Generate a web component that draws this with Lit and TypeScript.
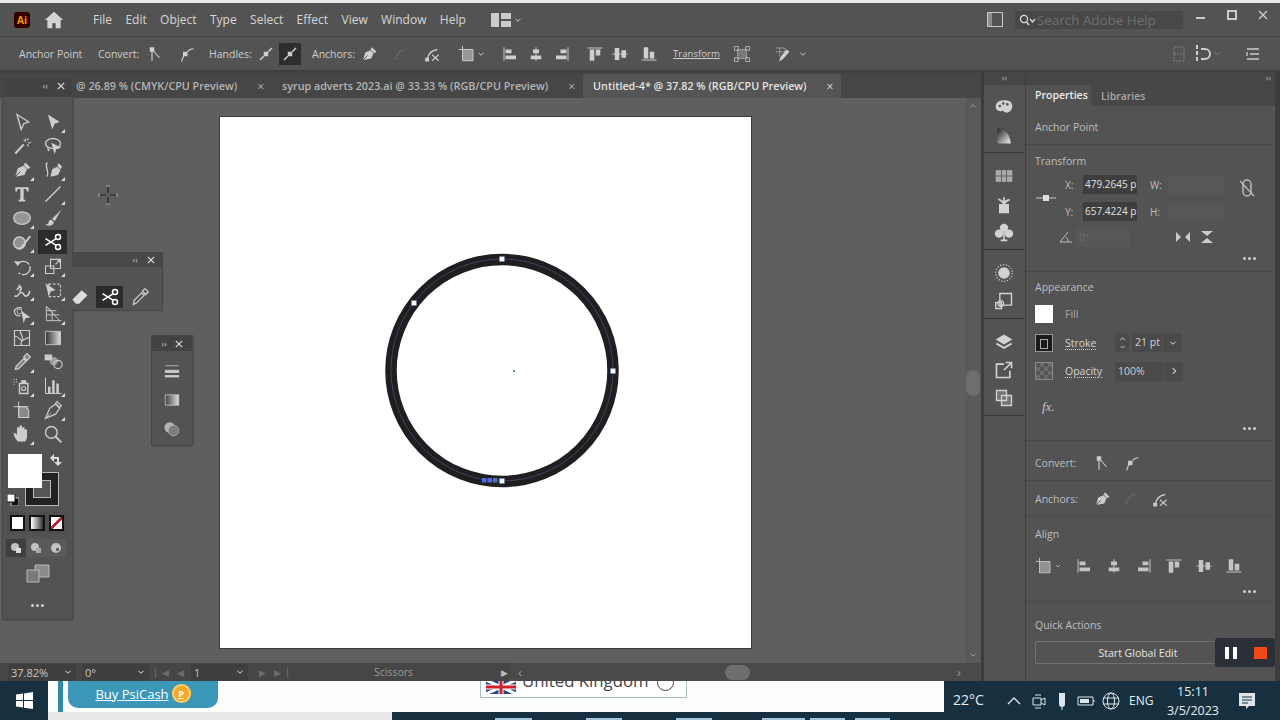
import { LitElement, html, css, svg } from 'lit';
import { customElement } from 'lit/decorators.js';

// shared icon shapes, 24x24 box, painted with currentColor
const scissors = svg`<g fill="none" stroke="currentColor" stroke-width="1.8"><circle cx="18" cy="6" r="3"/><circle cx="18" cy="18" r="3"/><path d="M16 8 3 16M16 16 3 8"/></g>`;
const anchorCorner = svg`<path d="M5 3h6v6H5z" fill="currentColor"/><path d="M8 8v13M10 8l8 9" fill="none" stroke="currentColor" stroke-width="1.5"/>`;
const anchorSmooth = svg`<path d="M8 9h6v6H8z" fill="currentColor"/><path d="M9 14 6 22M14 9c2-3 5-4 8-4" fill="none" stroke="currentColor" stroke-width="1.5"/>`;
const handles = svg`<path d="M9 9h6v6H9z" fill="currentColor"/><path d="M4 20l5-5M15 9l5-5" stroke="currentColor" stroke-width="2"/>`;
const pen = svg`<path d="M4 20 7 10l7-3 4 4-3 7zM14 6l2-3 6 6-3 2z" fill="currentColor"/><path d="M4 20l6-6" stroke="#555" stroke-width="1.2"/>`;
const curv = svg`<path d="M6 19a13 13 0 0 1 12-13" fill="none" stroke="currentColor" stroke-width="2" stroke-dasharray="3 1.5"/>`;
const joinTool = svg`<path d="M6 19C7 11 12 7 19 6" fill="none" stroke="currentColor" stroke-width="1.8"/><path d="M3 17h5v5H3z" fill="currentColor"/><path d="M12 13l9 8M12 21l9-8" stroke="currentColor" stroke-width="1.5"/>`;
const alignL = svg`<path d="M4 3v18" stroke="currentColor" stroke-width="1.3"/><path d="M6 6h8v5H6zM6 14h14v5H6z" fill="currentColor"/>`;
const alignC = svg`<path d="M12 3v18" stroke="currentColor" stroke-width="1.3"/><path d="M8 6h8v5H8zM5 14h14v5H5z" fill="currentColor"/>`;
const alignR = svg`<path d="M20 3v18" stroke="currentColor" stroke-width="1.3"/><path d="M10 6h8v5h-8zM4 14h14v5H4z" fill="currentColor"/>`;
const alignT = svg`<path d="M2 4h20" stroke="currentColor" stroke-width="1.3"/><path d="M5 6h6v15H5zM13 6h6v8h-6z" fill="currentColor"/>`;
const alignM = svg`<path d="M2 12h20" stroke="currentColor" stroke-width="1.3"/><path d="M5 4h6v16H5zM14 7h6v10h-6z" fill="currentColor"/>`;
const alignB = svg`<path d="M2 20h20" stroke="currentColor" stroke-width="1.3"/><path d="M5 3h6v15H5zM13 9h6v9h-6z" fill="currentColor"/>`;
const alignTo = svg`<path d="M6 6h14v15H6z" fill="currentColor" opacity=".55"/><path d="M1 6h19M6 1v20h14V6" fill="none" stroke="currentColor" stroke-width="1.2"/>`;
const chev = svg`<path d="M6 9l6 6 6-6" fill="none" stroke="currentColor" stroke-width="2.4"/>`;

const tools: [unknown, boolean?, boolean?][] = [
  [svg`<path d="M6 3 20 12l-6 2-3 7z" fill="none" stroke="currentColor" stroke-width="1.6"/>`],
  [svg`<path d="M6 3 20 12l-6 2-3 7z" fill="currentColor"/>`, true],
  [svg`<path d="M4 21 14 10" stroke="currentColor" stroke-width="2.4"/><path d="M16 3v4M19 8h4M14 5l1 1M20 3l-2 2M20 12l-2-2" stroke="currentColor" stroke-width="1.3"/>`],
  [svg`<ellipse cx="12" cy="9" rx="9" ry="6" fill="none" stroke="currentColor" stroke-width="1.6"/><path d="M6 13c-2 3 0 6 2 5M10 8l12 6-6 2-2 6z" fill="currentColor"/>`],
  [pen, true],
  [svg`<path d="M9 20 11 11l6-3 4 4-3 6zM17 7l2-3 4 4-2 3z" fill="currentColor"/><path d="M5 3C1 8 8 11 5 20" fill="none" stroke="currentColor" stroke-width="1.5"/>`, true],
  [svg`<path d="M4 4h16v5h-2l-1-3h-3v13h2v2H8v-2h2V6H7L6 9H4z" fill="currentColor"/>`],
  [svg`<path d="M3 21 21 3" stroke="currentColor" stroke-width="1.6"/>`, true],
  [svg`<ellipse cx="12" cy="12" rx="10" ry="7.5" fill="currentColor" fill-opacity=".55" stroke="currentColor" stroke-width="1.5"/>`, true],
  [svg`<path d="M22 2 11 13l3 3zM10 14c-3 0-3 3-4 5l-3 1c3 2 9 2 10-3z" fill="currentColor"/>`],
  [svg`<circle cx="9" cy="13" r="7" fill="currentColor" fill-opacity=".5" stroke="currentColor" stroke-width="1.8"/><path d="M22 5 10 20h-3" fill="none" stroke="currentColor" stroke-width="2.2"/>`, true],
  [scissors, false, true],
  [svg`<path d="M7 10a8 8 0 1 1 1 10" fill="none" stroke="currentColor" stroke-width="1.6" stroke-dasharray="16 2"/><path d="M2 6l5 6 3-5z" fill="currentColor"/>`, true],
  [svg`<path d="M3 12h10v9H3zM9 4h12v11H9z" fill="none" stroke="currentColor" stroke-width="1.3"/><path d="M15 10l5-5M17 5h3v3" fill="none" stroke="currentColor" stroke-width="1.3"/>`, true],
  [svg`<path d="M3 19c5 3 4-4 8-4s3 6 7 4 2-6 4-5M6 12c3-6 8-3 3 2M8 6l3 3" fill="none" stroke="currentColor" stroke-width="2"/>`, true],
  [svg`<path d="M7 5h14v15H7z" fill="none" stroke="currentColor" stroke-width="1.4" stroke-dasharray="3 2"/><path d="M3 4l12 8-6 2-2 6z" fill="currentColor"/>`, true],
  [svg`<path d="M12 5c-6-2-10 2-9 5s3 5 7 4" fill="none" stroke="currentColor" stroke-width="1.5"/><path d="M11 8l11 8-6 1-2 6z" fill="currentColor"/><circle cx="9" cy="9" r="3" fill="none" stroke="currentColor"/>`, true],
  [svg`<path d="M4 3v17h18M4 3l7 6v11M4 8h12M4 13h16M4 3l16 17" fill="none" stroke="currentColor" stroke-width="1.1"/>`, true],
  [svg`<path d="M3 3h18v18H3zM3 10c5-1 6 5 9 5s5-4 9-3M10 3c-1 5 5 6 2 12s0 4 0 6" fill="none" stroke="currentColor" stroke-width="1.4"/>`],
  [svg`<defs><linearGradient id="g1"><stop offset="0" stop-color="#333"/><stop offset="1" stop-color="#ddd"/></linearGradient></defs><path d="M3 4h18v16H3z" fill="url(#g1)" stroke="#ccc"/>`],
  [svg`<path d="M4 21l1-4 9-9 3 3-9 9zM14 6l4-4 4 4-4 4z" fill="currentColor" fill-opacity=".4" stroke="currentColor" stroke-width="1.4"/>`, true],
  [svg`<path d="M2 3h9v7H2z" fill="currentColor"/><circle cx="13" cy="11" r="5" fill="currentColor" opacity=".6"/><circle cx="18" cy="15" r="5" fill="none" stroke="currentColor" stroke-width="1.4"/>`],
  [svg`<path d="M9 9h10v12H9z" fill="none" stroke="currentColor" stroke-width="1.8"/><circle cx="14" cy="15" r="2.4" fill="none" stroke="currentColor" stroke-width="1.4"/><path d="M11 5h6v4h-6z" fill="currentColor"/><path d="M2 4h1M5 4h1M2 7h1M5 7h1M2 10h1" stroke="currentColor" stroke-width="1.5"/>`, true],
  [svg`<path d="M3 2v19h19" fill="none" stroke="currentColor" stroke-width="1.2"/><path d="M6 13h3v8H6zM11 5h3v16h-3zM16 9h3v12h-3z" fill="currentColor"/>`, true],
  [svg`<path d="M2 8h18M8 2v16" stroke="currentColor" stroke-width="1.2"/><path d="M8 8h8l4 4v9H8z" fill="currentColor" fill-opacity=".45" stroke="currentColor" stroke-width="1.3"/>`],
  [svg`<path d="M3 22 8 10l7-5 5 5-5 7zM15 4l2-2 5 5-2 2z" fill="none" stroke="currentColor" stroke-width="1.5"/><path d="M3 22l7-7" stroke="currentColor"/>`, true],
  [svg`<path d="M7 21c-2-2-5-7-5-9s3-1 4 1V5c0-2 2-2 3 0V3c0-2 3-2 3 0v2c1-2 3-2 3 0v2c1-2 3-1 3 1v7c0 3-1 4-2 6z" fill="currentColor"/>`, true],
  [svg`<circle cx="10" cy="10" r="7" fill="none" stroke="currentColor" stroke-width="1.7"/><path d="M15 15l7 7" stroke="currentColor" stroke-width="2.2"/>`],
];

const dock = [
  [svg`<path d="M12 5C5 5 2 9 2 13s4 6 7 5 3 2 6 2 7-3 7-8-4-7-10-7z" fill="currentColor"/><circle cx="7" cy="12" r="1.6" fill="#555"/><circle cx="11" cy="9" r="1.6" fill="#555"/><circle cx="16" cy="10" r="1.6" fill="#555"/>`,
   svg`<defs><linearGradient id="g2" x1="0" y1="0" x2="1" y2="1"><stop offset="0" stop-color="#222"/><stop offset="1" stop-color="#eee"/></linearGradient></defs><path d="M4 3c9 0 16 8 16 18H4z" fill="url(#g2)"/>`],
  [svg`<path d="M2 5h20v14H2z" fill="currentColor" opacity=".7"/><path d="M2 12h20M9 5v14M15 5v14" stroke="#555"/>`,
   svg`<path d="M7 13h10v9H7zM12 13c0-5-5-6-7-7M12 13V4M12 13c0-5 5-6 7-6" fill="currentColor" stroke="currentColor" stroke-width="2"/>`,
   svg`<circle cx="12" cy="7" r="5" fill="currentColor"/><circle cx="6" cy="14" r="5" fill="currentColor"/><circle cx="18" cy="14" r="5" fill="currentColor"/><path d="M12 12v9M8 22h8" stroke="currentColor" stroke-width="2"/>`],
  [svg`<circle cx="12" cy="12" r="7" fill="currentColor"/><circle cx="12" cy="12" r="10" fill="none" stroke="currentColor" stroke-width="1.4" stroke-dasharray="1.5 2"/>`,
   svg`<path d="M7 3h14v14H7z" fill="none" stroke="currentColor" stroke-width="1.6"/><path d="M2 14h7v7H2z" fill="none" stroke="currentColor" stroke-width="1.6"/><circle cx="8" cy="15" r="3.5" fill="none" stroke="currentColor" stroke-width="1.4"/>`],
  [svg`<path d="M12 3l10 6-10 6L2 9z" fill="currentColor"/><path d="M3 14l9 5 9-5" fill="none" stroke="currentColor" stroke-width="2.2"/>`,
   svg`<path d="M12 5H3v16h16v-8M14 3h7v7M21 3l-9 9" fill="none" stroke="currentColor" stroke-width="2"/>`,
   svg`<path d="M3 3h12v12H3zM9 9h12v12H9z" fill="currentColor" fill-opacity=".25" stroke="currentColor" stroke-width="1.6"/>`],
];

const menus = ['File', 'Edit', 'Object', 'Type', 'Select', 'Effect', 'View', 'Window', 'Help'];
const tabs = [
  { label: '@ 26.89 % (CMYK/CPU Preview)', on: false },
  { label: 'syrup adverts 2023.ai @ 33.33 % (RGB/CPU Preview)', on: false },
  { label: 'Untitled-4* @ 37.82 % (RGB/CPU Preview)', on: true },
];

@customElement('app-root')
export class AppRoot extends LitElement {
  static styles = css`
    :host {
      display: block;
      width: 1280px;
      height: 720px;
      overflow: hidden;
      font-family: 'Open Sans', sans-serif;
      font-size: 11px;
      color: #cfcfcf;
      background: #535353;
    }
    svg { display: block; }
    .ic { width: 18px; height: 18px; flex: none; }
    .app { display: flex; flex-direction: column; height: 720px; }
    .strip { height: 3px; background: #e9e9e9; flex: none; }

    /* menu bar */
    .menubar {
      height: 33px; flex: none; display: flex; align-items: center;
      padding-left: 14px; background: #535353; font-size: 12px; color: #d6d6d6;
    }
    .logo {
      width: 16px; height: 16px; border-radius: 3px; background: #330000; color: #ff9a00;
      font: 700 10px 'Open Sans', sans-serif; display: flex; align-items: center; justify-content: center;
    }
    .home { margin: 0 0 0 14px; color: #d4d4d4; width: 20px; height: 20px; }
    .menus { display: flex; gap: 13.4px; margin-left: 29px; }
    .layout { margin-left: 25px; color: #ccc; display: flex; align-items: center; gap: 2px; }
    .grow { flex: 1; }
    .search {
      width: 168px; height: 18px; margin-left: 12px; background: #484848; display: flex; align-items: center;
      padding-left: 4px; box-sizing: border-box; color: #6f6f6f; font-size: 13.4px;
    }
    .winbtns { display: flex; margin-left: 13px; width: 84px; justify-content: space-between; padding-right: 12px; box-sizing: border-box; margin-top: -10px; color: #ccc; }

    /* control bar */
    .control {
      height: 36px; flex: none; display: flex; align-items: center; box-sizing: border-box;
      padding-left: 19px; border-top: 1px solid #474747; border-bottom: 2px solid #3f3f3f; font-size: 10.5px; color: #cdcdcd;
    }
    .control .ic { color: #cfcfcf; }
    .cbtn { width: 22px; height: 22px; display: flex; align-items: center; justify-content: center; flex: none; }
    .cbtn.on { background: #2e2e2e; color: #fff; }
    .cbtn.off { opacity: .22; }
    .underline { text-decoration: underline; font-size: 9.6px; }

    /* main */
    .main { flex: 1; display: flex; min-height: 0; position: relative; }
    .doc { width: 981px; flex: none; display: flex; flex-direction: column; }
    .tabs { height: 26px; flex: none; display: flex; background: #464646; padding-left: 76px; font-weight: 600; font-size: 10.75px; color: #b5b5b5; box-sizing: border-box; border-top: 2px solid #434343; }
    .tab { display: flex; align-items: center; padding: 0 8px 0 10px; }
    .tab:first-child { padding-left: 0; }
    .tab span { margin-left: 20px; font-weight: 400; font-size: 12px; }
    .tab.on { background: #555; color: #e4e4e4; }
    .tab.on span { color: #ddd; }
    .canvas { flex: 1; display: flex; min-height: 0; background: #5f5f5f; }
    .pasteboard { flex: 1; padding: 19px 0 0 220px; box-sizing: border-box; }
    .artboard { width: 531px; height: 531px; background: #fff; box-shadow: 0 0 0 1px #3c3c3c; }
    .artboard svg { width: 531px; height: 531px; }
    .vscroll { width: 16px; flex: none; display: flex; flex-direction: column; align-items: center; justify-content: space-between; background: #595959; padding: 3px 0; box-sizing: border-box; color: #aaa; }
    .vthumb { width: 14px; height: 26px; border-radius: 7px; background: #6e6e6e; margin-top: 256px; margin-bottom: 252px; }
    .chv { width: 10px; height: 10px; flex: none; }
    .status { height: 18px; flex: none; display: flex; align-items: center; background: #464646; padding-left: 8px; font-size: 11px; color: #c6c6c6; }
    .field { background: #3f3f3f; height: 17px; display: flex; align-items: center; padding-left: 3px; box-sizing: border-box; }
    .sbtn { width: 16px; height: 17px; display: flex; align-items: center; justify-content: center; color: #ddd; background: #3f3f3f; margin-right: 6px; }
    .nav { color: #6c6c6c; font-size: 9px; display: flex; gap: 8px; margin: 0 8px 0 0; width: 28px; }
    .nav.after { margin: 0 0 0 5px; }
    .scissors { margin-left: 87px; color: #9a9a9a; font-size: 10.5px; width: 127px; flex: none; }
    .play { color: #bbb; font-size: 9px; width: 8px; flex: none; }
    .hscroll { flex: 1; display: flex; align-items: center; height: 18px; background: #4a4a4a; color: #999; padding: 0 20px 0 9px; font-size: 13px; }
    .hthumb { width: 25px; height: 15px; border-radius: 8px; background: #6e6e6e; margin-left: 203px; margin-right: auto; }

    /* floating panels */
    .panel { position: absolute; background: #535353; box-shadow: 0 0 0 1px #474747, 1px 1px 2px #3f3f3f; }
    .phead { display: flex; height: 19px; box-sizing: border-box; padding-bottom: 4px; align-items: center; justify-content: flex-end; gap: 9px; padding-right: 7px; background: #424242; color: #c5c5c5; font-size: 9px; }
    .x { width: 8px; height: 8px; color: #ddd; }
    .toolbar { left: 3px; top: 6px; width: 69px; height: 541px; }
    .toolgrid { display: grid; grid-template-columns: 31px 31px; grid-auto-rows: 24px; padding: 13px 0 0 3px; }
    .tool { display: flex; align-items: center; justify-content: center; color: #cdcdcd; position: relative; margin: 0 1px; }
    .tool .ic { width: 20px; height: 20px; }
    .tool.more::after { content: ''; position: absolute; right: 2px; bottom: 1px; border: 2px solid transparent; border-right-color: #ddd; border-bottom-color: #ddd; }
    .tool.on { background: #2c2c2c; color: #fff; }
    .swatches { position: relative; height: 58px; margin: 8px 0 0 5px; }
    .fill { position: absolute; left: 0; top: 0; width: 34px; height: 34px; background: #fff; z-index: 1; }
    .stroke { position: absolute; left: 17px; top: 18px; width: 34px; height: 34px; box-sizing: border-box; background: #222; border: 1px solid #b8b8b8; display: flex; align-items: center; justify-content: center; }
    .stroke i { width: 18px; height: 18px; box-sizing: border-box; display: block; background: #555; border: 1px solid #b8b8b8; }
    .swap { position: absolute; left: 41px; top: -1px; width: 14px; height: 14px; color: #ddd; }
    .defcol { position: absolute; left: -1px; top: 40px; width: 12px; height: 12px; }
    .modes { display: flex; gap: 4px; margin: 0 0 0 4px; height: 22px; align-items: center; background: #4f4f4f; width: 60px; justify-content: space-between; box-sizing: border-box; padding: 0 3px; }
    .mode { width: 12px; height: 12px; border: 2px solid #111; }
    .draw { display: flex; margin: 5px 0 0 3px; height: 18px; align-items: center; width: 60px; background: #5a5a5a; }
    .draw div { flex: 1; height: 100%; display: flex; align-items: center; justify-content: center; color: #c2c2c2; }
    .draw div:first-child { background: #3f3f3f; }
    .draw .ic { width: 12px; height: 12px; }
    .screen { display: flex; justify-content: center; margin-top: 4px; color: #b9b9b9; }
    .screen .ic { width: 24px; height: 24px; }
    .dots { display: flex; gap: 2px; }
    .dots i { width: 3px; height: 3px; border-radius: 50%; background: #cfcfcf; }
    .tdots { justify-content: center; margin-top: 19px; }
    .flyout { left: 72px; top: 180px; width: 90px; height: 58px; box-shadow: 1px 1px 1px #474747; }
    .flyout .phead { height: 15px; padding-bottom: 0; background: #484848; }
    .flyrow { display: flex; align-items: center; height: 43px; box-sizing: border-box; padding-top: 16px; gap: 3px; margin-left: -6px; }
    .flyrow .tool { width: 27px; height: 22px; margin: 0; flex: none; }
    .small { left: 152px; top: 264px; width: 40px; height: 109px; }
    .small .phead { height: 15px; padding-bottom: 0; gap: 8px; justify-content: center; padding-right: 0; }
    .small .col { display: flex; flex-direction: column; align-items: center; padding-top: 11px; gap: 11px; color: #cfcfcf; }
    .cursor { position: absolute; left: 98px; top: 113px; width: 20px; height: 20px; color: #222; }

    /* right dock */
    .dockstrip { width: 44px; flex: none; box-sizing: border-box; border-left: 3px solid #3c3c3c; background: #535353; display: flex; flex-direction: column; }
    .dockhead { height: 13px; background: #464646; flex: none; color: #bbb; font-size: 9px; text-align: center; line-height: 11px; }
    .dockgroup { border-bottom: 1px solid #373737; padding: 13px 0 7px; display: flex; flex-direction: column; align-items: center; gap: 8px; color: #d2d2d2; margin-right: 1px; }
    .dockgroup:nth-child(2) { padding: 11px 0 6px; gap: 10px; }
    .dockgroup .ic { width: 20px; height: 20px; }
    .dockfill { flex: 1; }
    .props { width: 250px; flex: none; border-left: 1px solid #3f3f3f; box-sizing: border-box; display: flex; flex-direction: column; color: #bdbdbd; }
    .prophead { height: 13px; background: #464646; flex: none; color: #bbb; font-size: 9px; text-align: right; padding-right: 4px; line-height: 11px; }
    .ptabs { height: 21px; flex: none; display: flex; align-items: center; background: #474747; font-size: 10.5px; font-weight: 600; color: #a9a9a9; }
    .ptabs b { width: 65px; height: 21px; line-height: 21px; box-sizing: border-box; padding-left: 9px; background: #535353; color: #ececec; font-weight: 600; margin-right: 10px; }
    .sec { padding: 0 9px; box-sizing: border-box; border-bottom: 1px solid #4a4a4a; }
    .h { font-size: 10.5px; color: #bdbdbd; }
    .anchor { height: 39px; padding-top: 14px; }
    .transform { height: 127px; padding-top: 9px; position: relative; }
    .tgrid { display: grid; grid-template-columns: 30px 17px 54px 32px auto; grid-auto-rows: 27px; margin-top: 3px; align-items: center; font-size: 10px; }
    .tval { height: 19px; line-height: 19px; background: #3e3e3e; color: #e2e2e2; padding-left: 2px; font-size: 10px; white-space: nowrap; box-sizing: border-box; width: 54px; margin-left: 1px; }
    .tlab { margin-left: 14px; }
    .tdim { height: 19px; width: 57px; background: #575757; }
    .trow { display: flex; align-items: center; height: 24px; }
    .angle { margin-left: 24px; }
    .angledim { width: 55px; height: 19px; line-height: 19px; padding-left: 4px; box-sizing: border-box; margin-left: 2px; background: #575757; color: #6b6b6b; font-size: 10px; }
    .flipv { margin-left: 45px; color: #ccc; }
    .fliph { margin-left: 8px; color: #ccc; }
    .link { position: absolute; left: 213px; top: 33px; color: #bbb; }
    .mdots { justify-content: flex-end; padding-right: 10px; }
    .transform .mdots { margin-top: 8px; }
    .appear { height: 169px; padding-top: 8px; }
    .arow { display: flex; align-items: center; height: 28.5px; }
    .aicon { width: 18px; height: 18px; box-sizing: border-box; margin-right: 12px; flex: none; }
    .aicon.stroked { background: #1b1b1b; border: 1px solid #999; padding: 4px; }
    .aicon.stroked div { border: 1px solid #aaa; height: 8px; }
    .aicon.white { background: #fff; }
    .aicon.opac { border: 1px solid #8a8a8a; background: repeating-conic-gradient(#6a6a6a 0 25%, #555 0 50%) 0 0/8px 8px; }
    .alabel { width: 50px; flex: none; font-size: 10.5px; }
    .alabel.dim { color: #a8a8a8; }
    .dotline { text-decoration: underline dotted; text-underline-offset: 2px; color: #d2d2d2; }
    .stepper { width: 14px; height: 19px; display: flex; flex-direction: column; align-items: center; justify-content: center; background: #4a4a4a; color: #d8d8d8; margin-right: 3px; }
    .stepper .chv { width: 9px; height: 8px; }
    .val { height: 19px; line-height: 19px; background: #4a4a4a; font-size: 10.5px; color: #cfcfcf; padding-left: 3px; box-sizing: border-box; margin-right: 1px; }
    .val.w30 { width: 30px; }
    .val.w48 { width: 48px; }
    .vbtn { width: 19px; height: 19px; display: flex; align-items: center; justify-content: center; background: #4a4a4a; color: #ddd; }
    .spacer6 { height: 6px; }
    .spacer14 { height: 14px; }
    .spacer15 { height: 15px; }
    .fx { font: italic 13px 'Liberation Serif', serif; color: #c5c5c5; padding: 13px 0 0 7px; height: 27px; box-sizing: border-box; }
    .rowsec { height: 36px; display: flex; align-items: center; font-size: 10.5px; }
    .rowsec.conv { height: 40px; padding-top: 4px; }
    .rowsec .lab { width: 58px; flex: none; }
    .rowsec .ic { margin-right: 11px; color: #c9c9c9; }
    .rowsec .off { opacity: .2; }
    .alignsec { height: 85px; padding-top: 10px; }
    .alignicons { display: flex; align-items: center; color: #c4c4c4; margin-top: 16px; height: 18px; gap: 12px; }
    .alignicons .ic { width: 18px; height: 18px; }
    .alignicons .first { display: flex; align-items: center; margin-right: 1px; }
    .alignicons .first .chv { width: 8px; height: 8px; margin-left: 1px; }
    .quick { padding: 16px 9px 0; position: relative; }
    .btn { width: 204px; height: 21px; margin-top: 9px; border: 1px solid #727272; border-radius: 2px; color: #e4e4e4; display: flex; align-items: center; justify-content: center; font-size: 10.5px; }
    .edge { width: 5px; flex: none; background: #3c3c3c; }
    .rec { position: absolute; right: 5px; bottom: 14px; width: 60px; height: 29px; background: #2a2f38; border-radius: 3px; display: flex; align-items: center; gap: 17px; padding-left: 9px; box-sizing: border-box; }
    .pause { width: 12px; height: 12px; border-left: 4px solid #fff; border-right: 4px solid #fff; box-sizing: border-box; margin-left: 1px; }
    .stop { width: 13px; height: 12px; background: #f04a1a; }

    /* taskbar + page behind it */
    .taskbar { height: 39px; flex: none; display: flex; background: #17303f; color: #e8eef2; }
    .start { width: 48px; flex: none; display: flex; align-items: center; justify-content: center; }
    .browser { width: 896px; flex: none; }
    .page { height: 31px; background: #fdfdfb; display: flex; padding-left: 10px; box-sizing: border-box; }
    .tealbar { width: 5px; background: #2f8aa6; }
    .buy { width: 150px; height: 27px; margin-left: 5px; background: #3a97b8; border-radius: 0 0 10px 10px; display: flex; align-items: center; justify-content: center; gap: 3px; box-sizing: border-box; padding-bottom: 2px; color: #fff; font-size: 13px; text-decoration: underline; }
    .coin { width: 19px; height: 19px; border-radius: 50%; background: #f2a928; box-shadow: inset 0 0 0 2px #f6cf72; color: #fff; font-size: 9px; font-weight: 700; display: flex; align-items: center; justify-content: center; }
    .kingdom { width: 205px; height: 16px; margin-left: 263px; background: #fff; box-shadow: 0 0 0 1px #a9bfb9; display: flex; overflow: hidden; align-items: flex-end; padding-left: 5px; box-sizing: border-box; color: #444; font-size: 16.8px; line-height: 26px; gap: 6px; white-space: nowrap; }
    .kingdom svg { width: 30px; height: 14px; flex: none; margin-bottom: 3px; }
    .kingdom span { display: block; margin-bottom: 3px; }
    .kingdom .circ { width: 15px; height: 15px; border: 1.5px solid #444; border-radius: 50%; flex: none; margin: 0 0 6px 2px; }
    .below { height: 8px; display: flex; }
    .gray { width: 344px; background: #e8e8e8; }
    .lights { flex: 1; display: flex; align-items: flex-end; padding-left: 103px; }
    .lights i { height: 2px; background: #9fc4dc; display: block; }
    .tray { flex: 1; display: flex; align-items: center; font-size: 14px; color: #e9eef2; }
    .temp { width: 62px; padding: 0 0 2px 9px; box-sizing: border-box; flex: none; }
    .tray .t { width: 20px; height: 18px; flex: none; color: #dfe6ea; }
    .tray .t.m5 { margin-left: 5px; }
    .tray .t.m3 { margin-left: 3px; }
    .tray .t.m4 { margin-left: 4px; }
    .tray .t.n2 { margin-left: -2px; }
    .tray .t.m8 { margin-left: 8px; }
    .eng { margin-left: 8px; font-size: 12px; width: 26px; flex: none; }
    .clock { width: 72px; text-align: center; font-size: 12.5px; line-height: 19px; flex: none; margin-left: 2px; }
  `;

  private ic(p: unknown, cls = 'ic') {
    return html`<svg class=${cls} viewBox="0 0 24 24">${p}</svg>`;
  }

  private x() {
    return html`<svg class="x" viewBox="0 0 10 10"><path d="M1 1l8 8M9 1l-8 8" stroke="currentColor" stroke-width="1.5"/></svg>`;
  }

  private dots(cls = '') {
    return html`<div class="dots ${cls}"><i></i><i></i><i></i></div>`;
  }

  private renderMenu() {
    return html`<div class="menubar">
      <div class="logo">Ai</div>
      <svg class="home" viewBox="0 0 24 24"><path d="M12 2 1 12h3v10h6v-6h4v6h6V12h3z" fill="currentColor"/></svg>
      <div class="menus">${menus.map((m) => html`<span>${m}</span>`)}</div>
      <div class="layout">
        <svg width="20" height="14" viewBox="0 0 20 14"><path d="M0 0h8v14H0zM10 0h10v6H10zM10 8h10v6H10z" fill="currentColor"/></svg>
        ${this.ic(chev, 'chv')}
      </div>
      <div class="grow"></div>
      <svg width="16" height="15" viewBox="0 0 16 15"><path d="M.5.5h15v14H.5z" fill="none" stroke="#c8c8c8"/><path d="M1 1h4v13H1z" fill="#c8c8c8" opacity=".5"/></svg>
      <div class="search">
        <svg width="18" height="12" viewBox="0 0 18 12"><circle cx="5" cy="5" r="3.6" fill="none" stroke="#ddd" stroke-width="1.2"/><path d="M7.5 8 10 11M11 5l2.5 3L16 5" fill="none" stroke="#ddd" stroke-width="1.2"/></svg>
        Search Adobe Help
      </div>
      <div class="winbtns">
        <svg width="9" height="10" viewBox="0 0 9 10"><path d="M0 7h9v2H0z" fill="currentColor"/></svg>
        <svg width="10" height="10" viewBox="0 0 10 10"><path d="M1 1h8v8H1z" fill="none" stroke="currentColor" stroke-width="2"/></svg>
        <svg width="10" height="10" viewBox="0 0 10 10"><path d="M1 1l8 8M9 1l-8 8" stroke="currentColor" stroke-width="1.4"/></svg>
      </div>
    </div>`;
  }

  private renderControl() {
    const gap = (w: number) => html`<span style="width:${w}px;flex:none"></span>`;
    return html`<div class="control">
      <span style="width:79px;flex:none">Anchor Point</span>
      <span style="width:46px;flex:none">Convert:</span>
      ${gap(0)}<div class="cbtn">${this.ic(anchorCorner)}</div>${gap(9)}<div class="cbtn">${this.ic(anchorSmooth)}</div>
      ${gap(12)}<span style="width:46px;flex:none">Handles:</span>
      ${gap(0)}<div class="cbtn">${this.ic(handles)}</div>${gap(2)}<div class="cbtn on">${this.ic(handles)}</div>
      ${gap(11)}<span style="width:46px;flex:none">Anchors:</span>
      <div class="cbtn">${this.ic(pen)}</div>${gap(10)}<div class="cbtn off">${this.ic(curv)}</div>${gap(9)}<div class="cbtn">${this.ic(joinTool)}</div>
      ${gap(18)}<div class="cbtn">${this.ic(alignTo)}${this.ic(chev, 'chv')}</div>
      ${gap(16)}<div class="cbtn">${this.ic(alignL)}</div>${gap(4)}<div class="cbtn">${this.ic(alignC)}</div>${gap(4)}<div class="cbtn">${this.ic(alignR)}</div>
      ${gap(11)}<div class="cbtn">${this.ic(alignT)}</div>${gap(3)}<div class="cbtn">${this.ic(alignM)}</div>${gap(7)}<div class="cbtn">${this.ic(alignB)}</div>
      ${gap(13)}<span class="underline" style="width:45px;flex:none">Transform</span>
      ${gap(13)}<div class="cbtn">${this.ic(svg`<path d="M6 6h12v12H6z" fill="currentColor" fill-opacity=".3" stroke="currentColor" stroke-dasharray="2 1"/><path d="M2 2h5v5H2zM17 2h5v5h-5zM2 17h5v5H2zM17 17h5v5h-5z" fill="none" stroke="currentColor"/>`)}</div>
      ${gap(18)}<div class="cbtn">${this.ic(svg`<path d="M4 4h12v12M4 9h12M9 4v12" fill="none" stroke="currentColor" stroke-dasharray="2 1"/><path d="M8 22l2-6 8-10 4 3-9 10z" fill="currentColor"/>`)}</div>
      ${gap(5)}${this.ic(chev, 'chv')}
      <div class="grow"></div>
      <svg width="12" height="16" viewBox="0 0 12 16" opacity=".35"><path d="M1 1h10v14H1zM1 8h10" fill="none" stroke="#ccc" stroke-dasharray="2 1"/></svg>
      ${gap(10)}<svg width="26" height="18" viewBox="0 0 26 18"><path d="M2 0v18" stroke="#ccc" stroke-width="2" stroke-dasharray="4 2"/><path d="M6 4h4a5 5 0 0 1 0 10H6" fill="none" stroke="#ccc" stroke-width="2"/><path d="M19 7l3 3 3-3" fill="none" stroke="#ccc" opacity=".3"/></svg>
      ${gap(25)}<svg width="14" height="14" viewBox="0 0 14 14"><path d="M1 2h12M4 7h9M1 12h12M1 5v4" stroke="#ccc" stroke-width="1.3" fill="none"/></svg>${gap(20)}
    </div>`;
  }

  private renderTabs() {
    return html`<div class="tabs">
      ${tabs.map((t) => html`<div class="tab ${t.on ? 'on' : ''}">${t.label}<span>×</span></div>`)}
    </div>`;
  }

  private renderArtboard() {
    // viewBox in page coordinates, the ring is free canvas content
    const anchors = [[502, 259], [414, 303], [613, 371], [502, 481]];
    const blue = [484, 489.5, 495];
    return html`<div class="artboard">
      <svg viewBox="220 117 531 531">
        <circle cx="502" cy="370.5" r="111" fill="none" stroke="#211e20" stroke-width="11.5"/>
        <circle cx="502" cy="370" r="111" fill="none" stroke="#565896" stroke-width=".6"/>
        ${blue.map((x) => svg`<rect x=${x - 2} y="478" width="4.5" height="4.5" fill="#4a6fd8"/>`)}
        ${anchors.map(([x, y]) => svg`<rect x=${x - 2.5} y=${y - 2.5} width="5" height="5" fill="#fff" stroke="#5a78c8" stroke-width=".5"/>`)}
        <rect x="513" y="370" width="2" height="2" fill="#4a9a9a"/>
      </svg>
    </div>`;
  }

  private renderStatus() {
    return html`<div class="status">
      <div class="field" style="width:52px">37.82%</div><div class="sbtn">${this.ic(chev, 'chv')}</div>
      <div class="field" style="width:51px">0°</div><div class="sbtn">${this.ic(chev, 'chv')}</div>
      <div class="nav"><span>▏◀</span><span>◀</span></div>
      <div class="field" style="width:41px">1</div><div class="sbtn">${this.ic(chev, 'chv')}</div>
      <div class="nav after"><span>▶</span><span>▶▕</span></div>
      <span class="scissors">Scissors</span>
      <span class="play">▶</span>
      <div class="hscroll"><span>‹</span><div class="hthumb"></div><span>›</span></div>
    </div>`;
  }

  private renderToolbar() {
    return html`<div class="panel toolbar">
      <div class="phead"><span>‹‹</span>${this.x()}</div>
      <div class="toolgrid">
        ${tools.map(([p, more, on]) => html`<div class="tool ${more ? 'more' : ''} ${on ? 'on' : ''}">${this.ic(p)}</div>`)}
      </div>
      <div class="swatches">
        <div class="fill"></div>
        <div class="stroke"><i></i></div>
        <svg class="swap" viewBox="0 0 14 14"><path d="M1 5l4-4v3h5v5h3l-4 4-4-4h3V6H5v3z" fill="currentColor"/></svg>
        <svg class="defcol" viewBox="0 0 12 12"><path d="M4 4h8v8H4z" fill="#111" stroke="#ccc"/><path d="M0 0h8v8H0z" fill="#fff" stroke="#111"/></svg>
      </div>
      <div class="modes">
        <div class="mode" style="background:#fff"></div>
        <div class="mode" style="background:linear-gradient(90deg,#fff,#333)"></div>
        <div class="mode" style="background:linear-gradient(135deg,#fff 42%,#c02030 42%,#c02030 58%,#fff 58%)"></div>
      </div>
      <div class="draw">
        <div>${this.ic(svg`<circle cx="10" cy="10" r="8" fill="currentColor"/><path d="M12 12h10v10H12z" fill="#ddd"/>`)}</div>
        <div>${this.ic(svg`<circle cx="10" cy="10" r="8" fill="currentColor"/><path d="M12 12h10v10H12z" fill="#aaa"/>`)}</div>
        <div>${this.ic(svg`<circle cx="12" cy="12" r="10" fill="currentColor"/><path d="M12 12h6v6h-6z" fill="#666"/>`)}</div>
      </div>
      <div class="screen">${this.ic(svg`<path d="M9 4h14v12H9z" fill="#8a8a8a" stroke="currentColor"/><path d="M1 9h12v12H1z" fill="#7a7a7a" stroke="currentColor"/>`)}</div>
      ${this.dots('tdots')}
    </div>`;
  }

  private renderProps() {
    return html`<div class="props">
      <div class="prophead">››</div>
      <div class="ptabs"><b>Properties</b><span>Libraries</span></div>
      <div class="sec anchor h">Anchor Point</div>
      <div class="sec transform">
        <div class="h">Transform</div>
        <div class="tgrid">
          <svg width="22" height="10" viewBox="0 0 22 10" style="grid-row:span 2"><path d="M1 5h20" stroke="#ccc"/><path d="M8 2h6v6H8z" fill="#ddd"/></svg>
          <span>X:</span><div class="tval">479.2645 p</div><span class="tlab">W:</span><div class="tdim"></div>
          <span>Y:</span><div class="tval">657.4224 p</div><span class="tlab">H:</span><div class="tdim"></div>
        </div>
        <div class="trow">
          <svg class="angle" width="14" height="12" viewBox="0 0 14 12"><path d="M13 11H1L9 1M9 11a5 5 0 0 0-2-5" fill="none" stroke="#bbb"/></svg>
          <div class="angledim">0°</div>
          <svg class="flipv" width="16" height="14" viewBox="0 0 16 14"><path d="M1 2v10l5-5zM15 2v10l-5-5z" fill="currentColor"/></svg>
          <svg class="fliph" width="16" height="14" viewBox="0 0 16 14"><path d="M2 1h12L8 6zM2 13h12L8 8z" fill="currentColor"/></svg>
        </div>
        <svg class="link" width="16" height="20" viewBox="0 0 16 20"><rect x="4" y="2" width="8" height="16" rx="4" fill="none" stroke="currentColor" stroke-width="1.5"/><path d="M1 3l14 15" stroke="currentColor" stroke-width="1.3"/></svg>
        ${this.dots('mdots')}
      </div>
      <div class="sec appear">
        <div class="h">Appearance</div>
        <div class="spacer6"></div>
        <div class="arow"><div class="aicon white"></div><span class="alabel dim">Fill</span></div>
        <div class="arow">
          <div class="aicon stroked"><div></div></div>
          <span class="alabel dotline">Stroke</span>
          <div class="stepper">${this.ic(svg`<path d="M5 16l7-8 7 8" fill="none" stroke="currentColor" stroke-width="2.5"/>`, 'chv')}${this.ic(chev, 'chv')}</div>
          <div class="val w30">21 pt</div><div class="vbtn">${this.ic(chev, 'chv')}</div>
        </div>
        <div class="arow">
          <div class="aicon opac"></div>
          <span class="alabel dotline">Opacity</span>
          <div class="val w48">100%</div><div class="vbtn">${this.ic(svg`<path d="M9 5l7 7-7 7" fill="none" stroke="currentColor" stroke-width="2.5"/>`, 'chv')}</div>
        </div>
        <div class="fx">fx.</div>
        <div class="spacer14"></div>
        ${this.dots('mdots')}
      </div>
      <div class="sec rowsec conv"><span class="lab">Convert:</span>${this.ic(anchorCorner)}${this.ic(anchorSmooth)}</div>
      <div class="sec rowsec"><span class="lab">Anchors:</span>${this.ic(pen)}${this.ic(curv, 'ic off')}${this.ic(joinTool)}</div>
      <div class="sec alignsec">
        <div class="h">Align</div>
        <div class="alignicons">
          <div class="first">${this.ic(alignTo)}${this.ic(chev, 'chv')}</div>
          ${[alignL, alignC, alignR, alignT, alignM, alignB].map((p) => this.ic(p))}
        </div>
        <div class="spacer15"></div>
        ${this.dots('mdots')}
      </div>
      <div class="quick">
        <div class="h">Quick Actions</div>
        <div class="btn">Start Global Edit</div>
      </div>
    </div>`;
  }

  render() {
    return html`<div class="app">
      <div class="strip"></div>
      ${this.renderMenu()}
      ${this.renderControl()}
      <div class="main">
        <div class="doc">
          ${this.renderTabs()}
          <div class="canvas">
            <div class="pasteboard">${this.renderArtboard()}</div>
            <div class="vscroll">${this.ic(svg`<path d="M6 15l6-6 6 6" fill="none" stroke="currentColor" stroke-width="2"/>`, 'chv')}<div class="vthumb"></div>${this.ic(chev, 'chv')}</div>
          </div>
          ${this.renderStatus()}
        </div>
        <div class="dockstrip">
          <div class="dockhead">‹‹</div>
          ${dock.map((g) => html`<div class="dockgroup">${g.map((p) => this.ic(p))}</div>`)}
          <div class="dockfill"></div>
        </div>
        ${this.renderProps()}
        <div class="edge"></div>
        ${this.renderToolbar()}
        <div class="panel flyout">
          <div class="phead"><span>‹‹</span>${this.x()}</div>
          <div class="flyrow">
            <div class="tool">${this.ic(svg`<path d="M3 15 14 4l7 6-10 10H7z" fill="#ddd"/>`)}</div>
            <div class="tool on">${this.ic(scissors)}</div>
            <div class="tool">${this.ic(svg`<path d="M4 21l1-5 9-9 3 3-9 9zM15 5l3-3 4 4-3 3z" fill="none" stroke="currentColor" stroke-width="1.5"/>`)}</div>
          </div>
        </div>
        <div class="panel small">
          <div class="phead"><span>››</span>${this.x()}</div>
          <div class="col">
            ${this.ic(svg`<path d="M3 5h18M3 11h18v3H3zM3 18h18v2H3z" stroke="currentColor" fill="currentColor" stroke-width="1"/>`)}
            ${this.ic(svg`<defs><linearGradient id="g3"><stop offset="0" stop-color="#444"/><stop offset="1" stop-color="#ddd"/></linearGradient></defs><path d="M3 5h18v14H3z" fill="url(#g3)" stroke="#ccc"/>`)}
            ${this.ic(svg`<circle cx="9" cy="10" r="7" fill="#b5b5b5"/><circle cx="14" cy="14" r="7" fill="#7d7d7d" stroke="#b5b5b5"/>`)}
          </div>
        </div>
        <svg class="cursor" viewBox="0 0 20 20"><path d="M10 1v7M10 12v7M1 10h7M12 10h7" stroke="#222" stroke-width="1.2"/><path d="M8.5 1h3M8.5 19h3M1 8.5v3M19 8.5v3" stroke="#bbb"/></svg>
        <div class="rec"><div class="pause"></div><div class="stop"></div></div>
      </div>
      <div class="taskbar">
        <div class="start"><svg width="17" height="17" viewBox="0 0 17 17"><path d="M0 2.5 7 1.5V8H0zM8 1.4 17 0v8H8zM0 9h7v6.5L0 14.5zM8 9h9v8l-9-1.3z" fill="#fff"/></svg></div>
        <div class="browser">
          <div class="page">
            <div class="tealbar"></div>
            <div class="buy">Buy PsiCash <span class="coin">P</span></div>
            <div class="kingdom">
              <svg viewBox="0 0 30 14"><path d="M0 0h30v14H0z" fill="#2b3f7f"/><path d="M0 0l30 14M30 0 0 14" stroke="#fff" stroke-width="3"/><path d="M15 0v14M0 7h30" stroke="#fff" stroke-width="5"/><path d="M15 0v14M0 7h30" stroke="#d0202f" stroke-width="3"/></svg>
              <span>United Kingdom</span><span class="circ"></span>
            </div>
          </div>
          <div class="below">
            <div class="gray"></div>
            <div class="lights">
              <i style="width:37px"></i><i style="width:54px;background:none"></i><i style="width:36px"></i><i style="width:54px;background:none"></i><i style="width:36px"></i><i style="width:50px;background:none"></i><i style="width:43px"></i><i style="width:5px;background:none"></i><i style="width:35px"></i><i style="width:10px;background:none"></i><i style="width:35px"></i>
            </div>
          </div>
        </div>
        <div class="tray">
          <span class="temp">22°C</span>
          <svg class="t n2" viewBox="0 0 20 18"><path d="M4 12l6-6 6 6" fill="none" stroke="currentColor" stroke-width="1.3"/></svg>
          <svg class="t m5" viewBox="0 0 20 18"><path d="M4 6h8v7H4zM12 8l4-2v7l-4-2M6 3h6M6 16h6" fill="none" stroke="currentColor"/></svg>
          <svg class="t m3" viewBox="0 0 20 18"><path d="M7 1h6v11a3 3 0 0 1-6 0z" fill="currentColor"/><path d="M10 15v3" stroke="currentColor"/></svg>
          <svg class="t m4" viewBox="0 0 20 18"><path d="M2 5h15v8H2z" fill="none" stroke="currentColor"/><path d="M4 7h9v4H4z" fill="currentColor"/><path d="M18 8v2" stroke="currentColor"/></svg>
          <svg class="t m5" viewBox="0 0 20 18"><circle cx="10" cy="9" r="8" fill="none" stroke="currentColor"/><ellipse cx="10" cy="9" rx="3.5" ry="8" fill="none" stroke="currentColor"/><path d="M2 6h16M2 12h16" stroke="currentColor"/></svg>
          <span class="eng">ENG</span>
          <div class="clock">15:11<br />3/5/2023</div>
          <svg class="t m8" viewBox="0 0 20 18"><path d="M2 1h16v13h-6l-3 3v-3H2z" fill="currentColor"/><path d="M5 5h10M5 8h10M5 11h6" stroke="#17303f"/></svg>
        </div>
      </div>
    </div>`;
  }
}
